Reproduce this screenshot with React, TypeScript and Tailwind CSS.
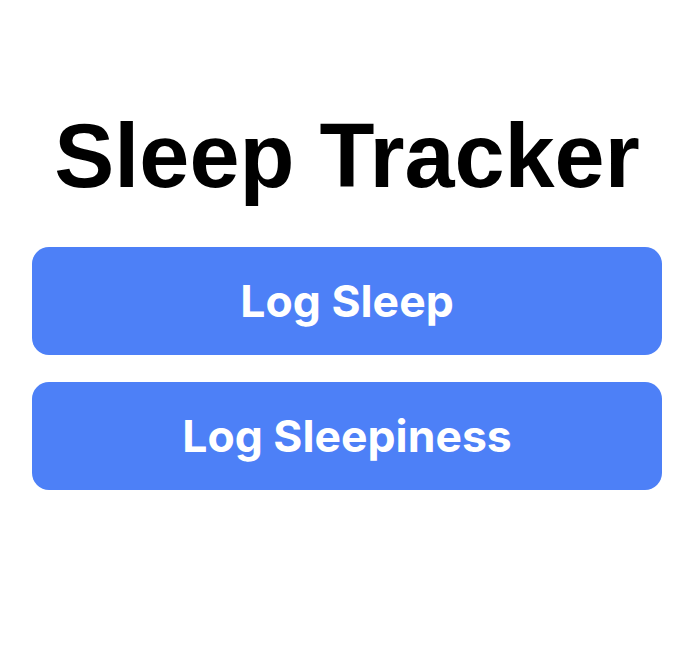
import React from "react";

export default function App() {
  const actions = ["Log Sleep", "Log Sleepiness"];

  return (
    <div className="min-h-[667px] w-full bg-white pl-[32px] pr-[30px] pt-[104px]">
      <h1 className="text-center text-[90px] leading-[104px] font-bold text-black font-['Liberation_Sans',Arial,sans-serif]">
        Sleep Tracker
      </h1>
      <div className="mt-[39px] flex flex-col gap-[27px]">
        {actions.map((label) => (
          <button
            key={label}
            className="h-[108px] w-full rounded-[17px] bg-[#4d80f7] text-[44.5px] font-bold text-white font-['Inter',sans-serif]"
          >
            {label}
          </button>
        ))}
      </div>
    </div>
  );
}
